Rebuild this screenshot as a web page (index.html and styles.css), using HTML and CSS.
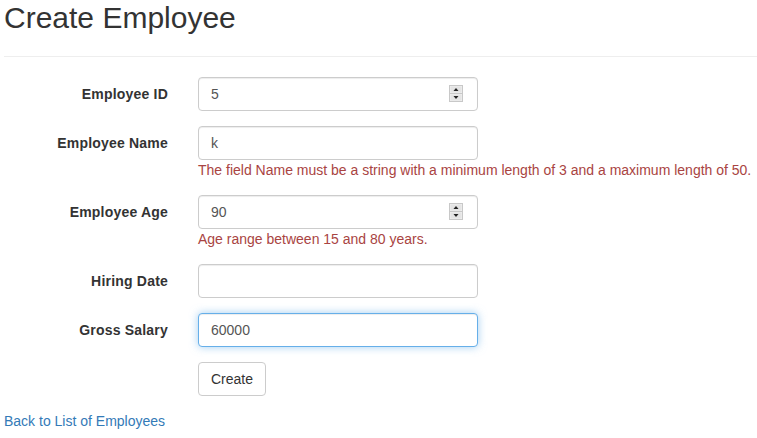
FILE: index.html
```
<!DOCTYPE html>
<html>
<head>
<meta charset="utf-8">
<link rel="stylesheet" href="styles.css">
</head>
<body>
<div class="page">
  <h2 class="title">Create Employee</h2>
  <hr class="rule">
  <form class="form">
    <div class="row">
      <label class="label">Employee ID</label>
      <div class="field">
        <div class="input-wrap">
          <input class="input" type="text" value="5">
          <svg class="spin" width="14" height="17" viewBox="0 0 14 17">
            <rect x="0.5" y="0.5" width="13" height="16" fill="#f0f0f0" stroke="#c8c8c8"/>
            <line x1="0.5" y1="8.5" x2="13.5" y2="8.5" stroke="#c8c8c8"/>
            <rect x="1.5" y="1.5" width="11" height="6" fill="#e4e4e4"/>
            <rect x="1.5" y="9.5" width="11" height="6" fill="#e4e4e4"/>
            <polygon points="4.5,6 9.5,6 7,3" fill="#222"/>
            <polygon points="4.5,11 9.5,11 7,14" fill="#222"/>
          </svg>
        </div>
      </div>
    </div>
    <div class="row">
      <label class="label">Employee Name</label>
      <div class="field">
        <div class="input-wrap">
          <input class="input" type="text" value="k">
        </div>
        <span class="error">The field Name must be a string with a minimum length of 3 and a maximum length of 50.</span>
      </div>
    </div>
    <div class="row">
      <label class="label">Employee Age</label>
      <div class="field">
        <div class="input-wrap">
          <input class="input" type="text" value="90">
          <svg class="spin" width="14" height="17" viewBox="0 0 14 17">
            <rect x="0.5" y="0.5" width="13" height="16" fill="#f0f0f0" stroke="#c8c8c8"/>
            <line x1="0.5" y1="8.5" x2="13.5" y2="8.5" stroke="#c8c8c8"/>
            <rect x="1.5" y="1.5" width="11" height="6" fill="#e4e4e4"/>
            <rect x="1.5" y="9.5" width="11" height="6" fill="#e4e4e4"/>
            <polygon points="4.5,6 9.5,6 7,3" fill="#222"/>
            <polygon points="4.5,11 9.5,11 7,14" fill="#222"/>
          </svg>
        </div>
        <span class="error">Age range between 15 and 80 years.</span>
      </div>
    </div>
    <div class="row">
      <label class="label">Hiring Date</label>
      <div class="field">
        <div class="input-wrap">
          <input class="input" type="text" value="">
        </div>
      </div>
    </div>
    <div class="row">
      <label class="label">Gross Salary</label>
      <div class="field">
        <div class="input-wrap">
          <input class="input focused" type="text" value="60000">
        </div>
      </div>
    </div>
    <div class="row">
      <span class="label"></span>
      <div class="field">
        <button class="btn" type="button">Create</button>
      </div>
    </div>
  </form>
  <div class="back"><a class="link" href="#">Back to List of Employees</a></div>
</div>
</body>
</html>
```
FILE: styles.css
```
html, body {
  margin: 0;
  padding: 0;
  background: #fff;
}
body {
  font-family: "Liberation Sans", Arial, Helvetica, sans-serif;
  font-size: 14px;
  line-height: 20px;
  color: #333;
}
.page {
  padding-left: 4px;
}
.title {
  margin: 0;
  padding-top: 1px;
  font-size: 30px;
  font-weight: 400;
  line-height: 33px;
  color: #333;
}
.rule {
  margin: 22px 0 20px 0;
  border: 0;
  border-top: 1px solid #eee;
  height: 0;
}
.form {
  margin: 0;
}
.row {
  display: grid;
  grid-template-columns: 164px 1fr;
  column-gap: 30px;
  margin-bottom: 15px;
}
.label {
  text-align: right;
  font-weight: 700;
  padding-top: 7px;
  white-space: nowrap;
  letter-spacing: 0.2px;
}
.field {
  display: flex;
  flex-direction: column;
  align-items: flex-start;
}
.input-wrap {
  position: relative;
  width: 280px;
}
.input {
  display: block;
  box-sizing: border-box;
  width: 280px;
  height: 34px;
  padding: 6px 12px;
  font-family: inherit;
  font-size: 14px;
  line-height: 20px;
  color: #555;
  background: #fff;
  border: 1px solid #ccc;
  border-radius: 4px;
  box-shadow: inset 0 1px 1px rgba(0,0,0,.075);
  outline: none;
}
.input.focused {
  border-color: #66afe9;
  box-shadow: inset 0 1px 1px rgba(0,0,0,.075), 0 0 8px rgba(102,175,233,.6);
}
.spin {
  position: absolute;
  left: 251px;
  top: 8px;
}
.error {
  color: #a94442;
  white-space: nowrap;
}
.btn {
  box-sizing: border-box;
  height: 34px;
  padding: 6px 12px;
  font-family: inherit;
  font-size: 14px;
  line-height: 20px;
  color: #333;
  background: #fff;
  border: 1px solid #ccc;
  border-radius: 4px;
}
.back {
  margin-top: 0;
}
.link {
  color: #337ab7;
  text-decoration: none;
}
```
